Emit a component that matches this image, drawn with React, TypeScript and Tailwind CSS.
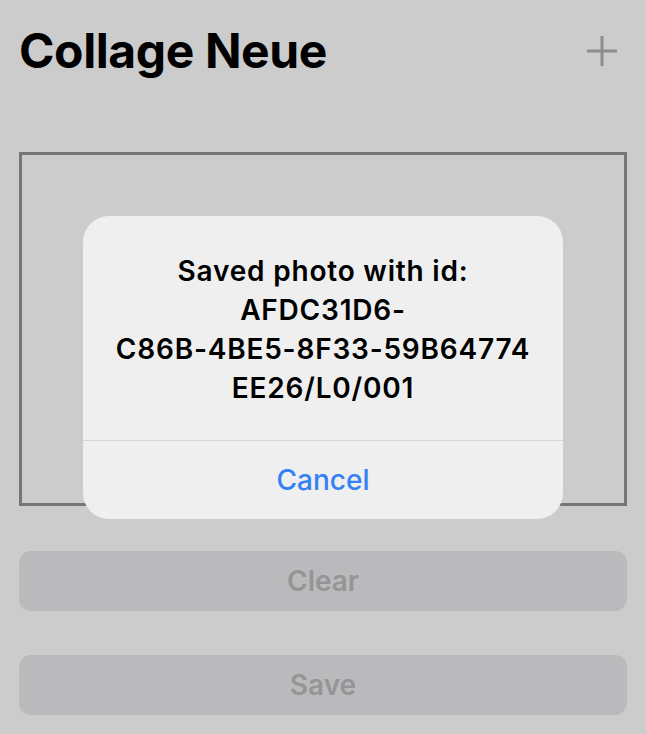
export default function App() {
  return (
    <div className="relative min-h-[734px] w-full bg-[#cccccc] font-['Inter',sans-serif] px-[19px] pt-[22px]">
      {/* Header */}
      <div className="flex items-center justify-between h-[58px]">
        <h1 className="text-[48px] font-bold leading-none text-black tracking-[-0.4px]">Collage Neue</h1>
        <svg className="w-[32px] h-[32px] mr-[9px] text-[#8c8c8c]" viewBox="0 0 32 32" fill="none" stroke="currentColor" strokeWidth="3">
          <path d="M16 1v30M1 16h30" />
        </svg>
      </div>

      {/* Collage frame */}
      <div className="mt-[72px] h-[354px] border-[3px] border-[#767678]" />

      {/* Actions */}
      <div className="mt-[45px] flex flex-col gap-[44px]">
        <button className="h-[60px] w-full rounded-[12px] bg-[#bababc] text-[28px] font-semibold text-[#959597]">Clear</button>
        <button className="h-[60px] w-full rounded-[12px] bg-[#bababc] text-[28px] font-semibold text-[#959597]">Save</button>
      </div>

      {/* Alert */}
      <div className="fixed inset-0 flex items-center justify-center">
        <div className="w-[480px] h-[303px] rounded-[26px] bg-[#efefef] flex flex-col">
          <div className="flex-1 flex flex-col items-center justify-center pt-[4px] text-[28px] font-semibold leading-[39px] tracking-[0.8px] text-black text-center">
            <p>Saved photo with id:</p>
            <p>AFDC31D6-</p>
            <p>C86B-4BE5-8F33-59B64774</p>
            <p>EE26/L0/001</p>
          </div>
          <div className="h-px bg-[#d6d6d6]" />
          <div className="h-[78px] flex items-center justify-center text-[28px] font-medium text-[#3381f5]">Cancel</div>
        </div>
      </div>
    </div>
  );
}
